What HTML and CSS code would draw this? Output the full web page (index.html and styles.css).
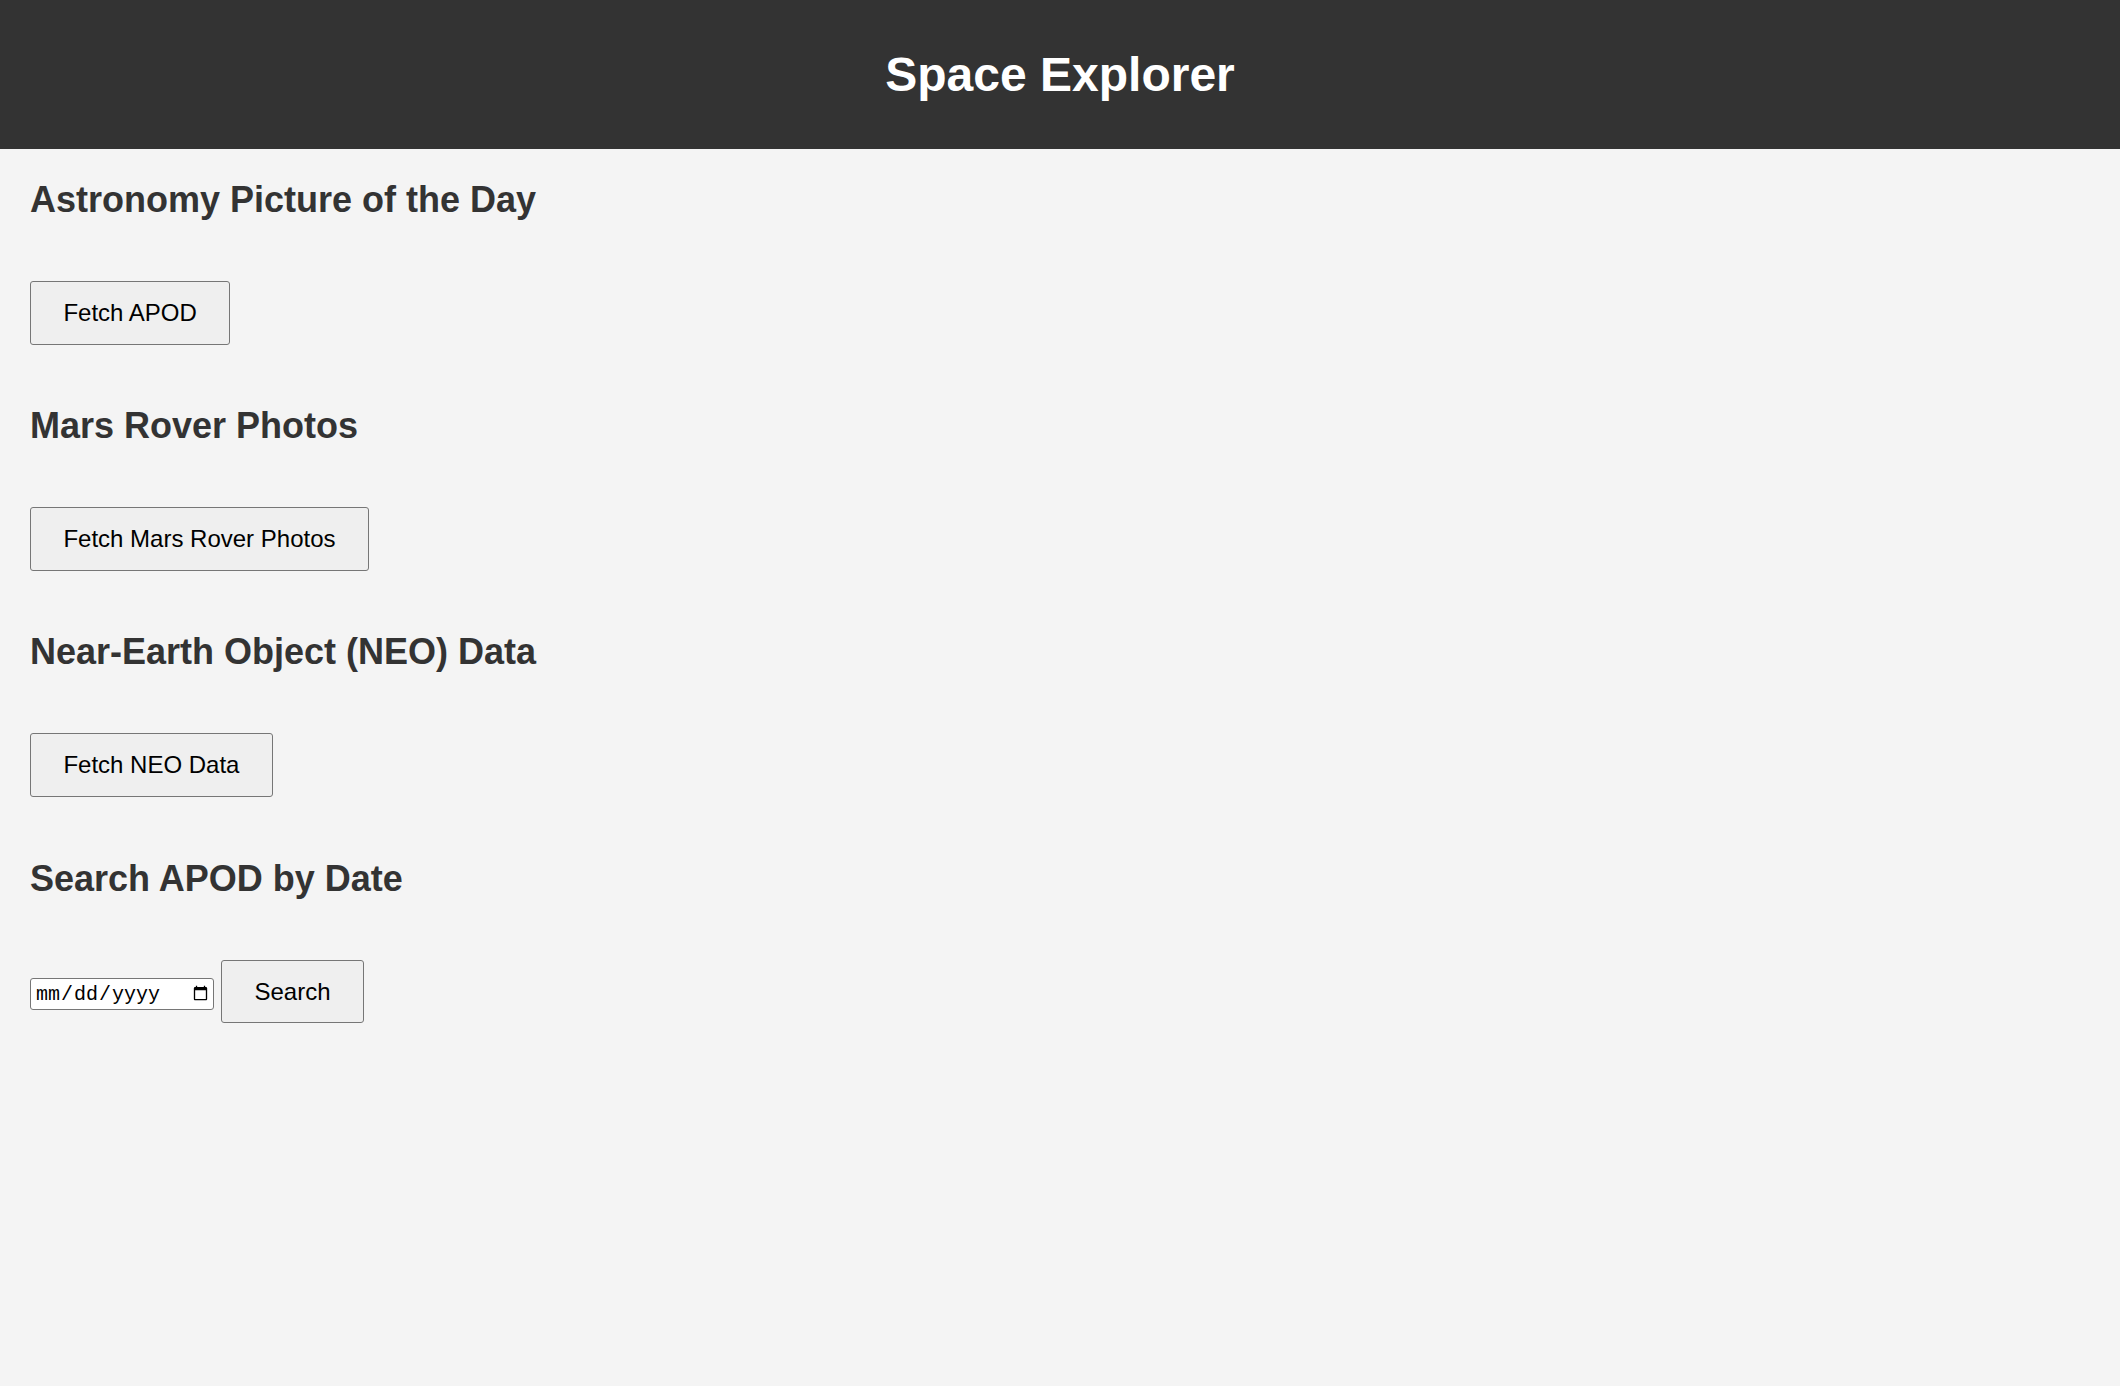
FILE: index.html
```html
<!DOCTYPE html>
<html lang="en">
<head>
<meta charset="utf-8">
<title>Space Explorer</title>
<link rel="stylesheet" href="styles.css">
</head>
<body>
<header class="site-header">
  <h1 class="site-title">Space Explorer</h1>
</header>
<main class="content">
  <section class="panel">
    <h2 class="panel-title">Astronomy Picture of the Day</h2>
    <div class="panel-actions">
      <button class="btn" type="button">Fetch APOD</button>
    </div>
  </section>
  <section class="panel">
    <h2 class="panel-title">Mars Rover Photos</h2>
    <div class="panel-actions">
      <button class="btn" type="button">Fetch Mars Rover Photos</button>
    </div>
  </section>
  <section class="panel">
    <h2 class="panel-title">Near-Earth Object (NEO) Data</h2>
    <div class="panel-actions">
      <button class="btn" type="button">Fetch NEO Data</button>
    </div>
  </section>
  <section class="panel">
    <h2 class="panel-title">Search APOD by Date</h2>
    <div class="panel-actions">
      <input class="date-input" type="date">
      <button class="btn" type="button">Search</button>
    </div>
  </section>
</main>
</body>
</html>
```
FILE: styles.css
```css
html, body {
  margin: 0;
  background: #f4f4f4;
}

body {
  font-family: "Liberation Sans", Arial, Helvetica, sans-serif;
  font-size: 24px;
  color: #000;
  min-height: 100vh;
}

.site-header {
  background: #333333;
  color: #ffffff;
  padding: 15px 0;
  text-align: center;
}

.site-title {
  margin: 31.9px 0;
  font-size: 48px;
  line-height: 55.2px;
  font-weight: bold;
}

.content {
  padding: 0 30px;
}

.panel-title {
  color: #333333;
  font-size: 36px;
  line-height: 41.4px;
  font-weight: bold;
  margin: 29.88px 0;
}

.panel-actions {
  display: flex;
  align-items: baseline;
  gap: 6.7px;
  padding: 30.7px 0;
}

.btn {
  font-family: inherit;
  font-size: 24px;
  line-height: 31.7px;
  padding: 15px 32.4px;
  border: 1px solid #767676;
  border-radius: 3px;
  background: #efefef;
  color: #000;
  margin: 0;
}

.date-input {
  font-family: "Liberation Mono", "Courier New", monospace;
  font-size: 20px;
  width: 184.4px;
  height: 31.7px;
  box-sizing: border-box;
  border: 1px solid #767676;
  border-radius: 3px;
  padding: 1px 4px;
  background: #ffffff;
  color: #000;
  margin: 0;
}

.date-input::-webkit-calendar-picker-indicator {
  width: 17px;
  height: 18px;
  padding: 0;
  margin-left: 6px;
  background-size: contain;
}
```
